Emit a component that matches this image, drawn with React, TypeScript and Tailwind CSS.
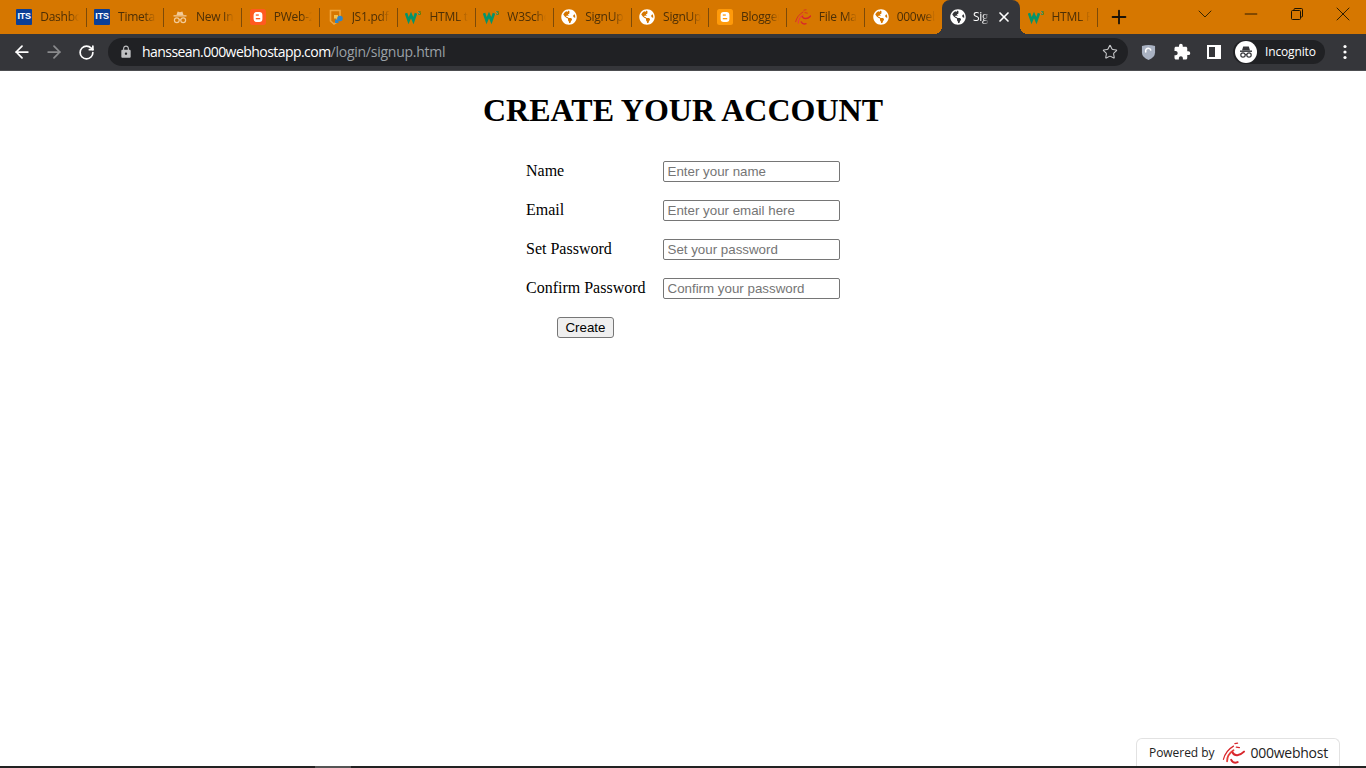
import React from "react";
import { ArrowLeft, ArrowRight, RotateCw, Star, Plus, ChevronDown, X, Minus } from "lucide-react";
import { FaGlobeAmericas } from "react-icons/fa";
import { MdExtension, MdLock } from "react-icons/md";

const Its = () => (
  <span className="w-4 h-4 bg-[#0b3f96] flex items-center justify-center text-white text-[9px] font-bold font-['Liberation_Sans',sans-serif] rounded-[1px] tracking-[-0.2px] shrink-0">ITS</span>
);
const Spy = ({ c = "#f3cb98" }: { c?: string }) => (
  <svg viewBox="0 0 16 16" className="w-4 h-4 shrink-0">
    <path d="M4.5 6 L5.6 2.6 L8 3.2 L10.4 2.6 L11.5 6Z" fill={c} />
    <rect x="1.5" y="6.2" width="13" height="1.3" fill={c} />
    <circle cx="4.8" cy="11.2" r="2.4" fill="none" stroke={c} strokeWidth="1.2" />
    <circle cx="11.2" cy="11.2" r="2.4" fill="none" stroke={c} strokeWidth="1.2" />
    <path d="M7 10.8 H9" stroke={c} strokeWidth="1" />
  </svg>
);
const Blogger = ({ c }: { c: string }) => (
  <svg viewBox="0 0 16 16" className="w-4 h-4 shrink-0">
    <rect width="16" height="16" rx="2.5" fill={c} />
    <rect x="3.6" y="3" width="8.8" height="10" rx="3" fill="#fff" />
    <rect x="5.8" y="5.4" width="3" height="1.3" fill={c} />
    <rect x="5.8" y="9" width="4.4" height="1.3" fill={c} />
  </svg>
);
const Pdf = () => (
  <svg viewBox="0 0 16 16" className="w-4 h-4 shrink-0">
    <path d="M2.5 1.5 H12 V8 H9 V13 L6 15 L2.5 12Z" fill="none" stroke="#f0a63c" strokeWidth="1.6" />
    <rect x="6" y="6" width="4" height="3.5" fill="#f2c14e" />
    <circle cx="12" cy="9.5" r="2.8" fill="#2f86c9" />
    <rect x="7" y="10.5" width="3.5" height="3.5" fill="#2f86c9" />
  </svg>
);
const W3 = () => (
  <svg viewBox="0 0 16 16" className="w-4 h-4 shrink-0">
    <polyline points="1,4.2 3.6,11.6 6,6 8.4,11.6 11,4.2" fill="none" stroke="#04946a" strokeWidth="2.6" />
    <text x="12.4" y="5.6" fontSize="5.5" fontWeight="700" fill="#04946a" fontFamily="Liberation Sans, sans-serif">3</text>
  </svg>
);
const Swirl = ({ className = "w-4 h-4" }: { className?: string }) => (
  <svg viewBox="0 0 24 24" className={`${className} shrink-0`} fill="none" strokeLinecap="round">
    <path d="M1 19 C2.5 13 6 8 12 4.5" stroke="#d8262c" strokeWidth="1.3" />
    <path d="M5 21 C5 16 7.5 12 12 9" stroke="#e8403a" strokeWidth="2" />
    <path d="M13.5 1.8 L16.5 1.2" stroke="#d8262c" strokeWidth="1.3" />
    <path d="M15 5.5 L18.5 6.2" stroke="#d8262c" strokeWidth="1.3" />
    <path d="M11 11.5 C13 15.5 18.5 15.5 23.5 10.5" stroke="#d8262c" strokeWidth="2.2" />
    <path d="M9.5 19.5 C11 22.5 14 23 16.5 22" stroke="#d8262c" strokeWidth="2.2" />
  </svg>
);
const Globe = () => <FaGlobeAmericas className="w-4 h-4 text-white shrink-0" />;

const tabs: { label: string; icon: React.ReactNode }[] = [
  { label: "Dashboard", icon: <Its /> },
  { label: "Timetable", icon: <Its /> },
  { label: "New Incognito", icon: <Spy /> },
  { label: "PWeb-2022", icon: <Blogger c="#ff5a1f" /> },
  { label: "JS1.pdf", icon: <Pdf /> },
  { label: "HTML tables", icon: <W3 /> },
  { label: "W3Schools", icon: <W3 /> },
  { label: "SignUp", icon: <Globe /> },
  { label: "SignUp", icon: <Globe /> },
  { label: "Blogger", icon: <Blogger c="#ff9a0a" /> },
  { label: "File Manager", icon: <Swirl /> },
  { label: "000webhost", icon: <Globe /> },
];

function Tab({ label, icon, sep = true }: { label: string; icon: React.ReactNode; sep?: boolean }) {
  return (
    <div className="w-[77.86px] h-[34px] flex items-center pl-[7.5px] pr-2 gap-2 relative shrink-0">
      {icon}
      <span className="flex-1 overflow-hidden whitespace-nowrap text-[12px] tracking-[-0.25px] text-[#4d2f05] [mask-image:linear-gradient(to_right,black_72%,transparent_100%)]">{label}</span>
      {sep && <span className="absolute right-0 top-[8px] h-[19px] w-px bg-[#7d4a08]" />}
    </div>
  );
}

const inputCls =
  "h-[21px] border border-[#767676] rounded-[2px] px-[3.5px] text-[13.33px] font-['Liberation_Sans',sans-serif] placeholder:text-[#757575]";

export default function App() {
  return (
    <div className="h-screen w-full flex flex-col bg-white overflow-hidden relative font-['Open_Sans',sans-serif]">
      <div className="h-[34px] bg-[#d67700] flex shrink-0 pl-[8.7px]">
        {tabs.map((t, i) => (
          <Tab key={i} label={t.label} icon={t.icon} sep={i !== 11} />
        ))}
        <div className="relative w-[78px] h-[34px] bg-[#35363a] rounded-t-[8px] flex items-center pl-[8px] pr-[8px] gap-[7px] shrink-0 text-white -ml-px">
          <span className="absolute -left-[8px] bottom-0 w-2 h-2 bg-[radial-gradient(circle_at_0_0,transparent_8px,#35363a_8px)]" />
          <span className="absolute -right-[8px] bottom-0 w-2 h-2 bg-[radial-gradient(circle_at_100%_0,transparent_8px,#35363a_8px)]" />
          <FaGlobeAmericas className="w-4 h-4 shrink-0" />
          <span className="flex-1 overflow-hidden whitespace-nowrap text-[12px] tracking-[-0.25px] [mask-image:linear-gradient(to_right,black_60%,transparent_100%)]">SignUp</span>
          <X className="w-[16px] h-[16px] shrink-0" strokeWidth={2.5} />
        </div>
        <Tab label="HTML Forms" icon={<W3 />} />
        <div className="w-[43px] flex items-center justify-center text-[#1a1208]">
          <Plus className="w-[22px] h-[22px]" strokeWidth={2} />
        </div>
        <div className="flex-1" />
        <div className="w-[46px] h-[28px] flex items-center justify-center text-[#3a2500]">
          <ChevronDown className="w-[24px] h-[24px]" strokeWidth={1} />
        </div>
        <div className="w-[46px] h-[28px] flex items-center justify-center text-[#1c1300]">
          <Minus className="w-[20px] h-[20px]" strokeWidth={1.1} />
        </div>
        <div className="w-[46px] h-[28px] flex items-center justify-center">
          <svg viewBox="0 0 12 12" className="w-3 h-3" fill="none" stroke="#1c1300" strokeWidth="1">
            <rect x="0.5" y="2.5" width="9" height="9" rx="1" />
            <path d="M3 2.5 V1.5 Q3 .5 4 .5 H10.5 Q11.5 .5 11.5 1.5 V8 Q11.5 9 10.5 9 H9.5" />
          </svg>
        </div>
        <div className="w-[46px] h-[28px] flex items-center justify-center text-[#1c1300]">
          <X className="w-[24px] h-[24px]" strokeWidth={0.9} />
        </div>
      </div>

      <div className="h-[37px] bg-[#35363a] border-b border-[#4c4d50] flex items-center shrink-0 text-white">
        <div className="w-[108px] pl-[6px] flex items-center">
          <span className="w-8 flex justify-center"><ArrowLeft className="w-[20px] h-[20px]" strokeWidth={2.1} /></span>
          <span className="w-8 flex justify-center text-[#8a8b8d]"><ArrowRight className="w-[20px] h-[20px]" strokeWidth={2.1} /></span>
          <span className="w-8 flex justify-center"><RotateCw className="w-[17px] h-[17px]" strokeWidth={2.4} /></span>
        </div>
        <div className="w-[1020px] h-[28px] rounded-full bg-[#202124] flex items-center pl-[11px] pr-[10px]">
          <MdLock className="w-[14px] h-[14px] text-[#c0c1c3] shrink-0" />
          <span className="ml-[9px] -mt-[1px] text-[14px] tracking-[-0.55px] whitespace-nowrap">
            hanssean.000webhostapp.com<span className="text-[#9aa0a6] tracking-[-0.25px]">/login/signup.html</span>
          </span>
          <span className="flex-1" />
          <Star className="w-[16px] h-[16px] text-[#c8c9cb]" strokeWidth={1.6} />
        </div>
        <div className="flex-1 flex items-center pl-[13px]">
          <svg viewBox="0 0 16 18" className="w-[15px] h-[17px] shrink-0">
            <path d="M1 2 Q8 0 15 2 V9 Q15 14 8 17 Q1 14 1 9Z" fill="#a9b2c2" />
            <path d="M5.5 9 A2.8 2.8 0 1 1 10.5 7" fill="none" stroke="#fff" strokeWidth="1.6" />
          </svg>
          <MdExtension className="w-[18px] h-[18px] ml-[17px] shrink-0" />
          <svg viewBox="0 0 14 14" className="w-[14px] h-[14px] ml-[16px] shrink-0">
            <rect x="1" y="1" width="12" height="12" fill="none" stroke="#fff" strokeWidth="2" />
            <rect x="8" y="1" width="5" height="12" fill="#fff" />
          </svg>
          <div className="ml-[12px] h-[24px] w-[92px] rounded-full bg-[#202124] flex items-center pl-[2px] shrink-0">
            <span className="w-[22px] h-[22px] rounded-full bg-white flex items-center justify-center shrink-0">
              <svg viewBox="0 0 16 16" className="w-[16px] h-[16px]">
                <path d="M4 6.5 L5.2 2.6 H10.8 L12 6.5Z" fill="#35363a" />
                <rect x="2" y="6.5" width="12" height="1.4" fill="#35363a" />
                <circle cx="5" cy="11" r="2.2" fill="none" stroke="#35363a" strokeWidth="1.2" />
                <circle cx="11" cy="11" r="2.2" fill="none" stroke="#35363a" strokeWidth="1.2" />
                <path d="M7 10.6 H9" stroke="#35363a" strokeWidth="1" />
              </svg>
            </span>
            <span className="ml-[8px] text-[12px] tracking-[-0.15px]">Incognito</span>
          </div>
          <svg viewBox="0 0 4 16" className="w-[4px] h-[16px] ml-[18px] shrink-0" fill="#fff">
            <circle cx="2" cy="2.5" r="1.6" />
            <circle cx="2" cy="8" r="1.6" />
            <circle cx="2" cy="13.5" r="1.6" />
          </svg>
        </div>
      </div>

      <main className="flex-1 flex flex-col items-center">
        <h1 className="mt-[21px] mb-[21px] text-[32px] leading-[37px] font-bold text-black font-['Liberation_Serif',serif]">CREATE YOUR ACCOUNT</h1>
        <form className="mt-[11px] grid grid-cols-[120px_177px] gap-x-[17px] gap-y-[18px] items-start font-['Liberation_Serif',serif] text-[16px] leading-[21px] text-black">
          <label className="h-[21px] -mt-[1px]">Name</label>
          <input placeholder="Enter your name" className={inputCls} />
          <label className="h-[21px] -mt-[1px]">Email</label>
          <input placeholder="Enter your email here" className={inputCls} />
          <label className="h-[21px] -mt-[1px]">Set Password</label>
          <input placeholder="Set your password" className={inputCls} />
          <label className="h-[21px] -mt-[1px] whitespace-nowrap">Confirm Password</label>
          <input placeholder="Confirm your password" className={inputCls} />
          <div className="flex pl-[31px]">
            <button type="button" className="w-[57px] h-[21px] bg-[#efefef] border border-[#767676] rounded-[3px] text-[13.33px] leading-none font-['Liberation_Sans',sans-serif] text-black">Create</button>
          </div>
        </form>
      </main>

      <div className="h-[2px] bg-[#222] shrink-0 flex pl-[315px]">
        <span className="w-[36px] h-full bg-[#555]" />
      </div>

      <div className="absolute right-[26px] bottom-[2px] w-[204px] h-[28px] bg-white border border-b-0 border-[#e2e2e2] rounded-t-[6px] flex items-center pl-[12px] text-[#222]">
        <span className="text-[12px] tracking-[-0.05px] whitespace-nowrap">Powered by</span>
        <Swirl className="w-[25px] h-[22px] ml-[7px]" />
        <span className="ml-[4px] text-[14px] tracking-[-0.25px] whitespace-nowrap">000webhost</span>
      </div>
    </div>
  );
}
